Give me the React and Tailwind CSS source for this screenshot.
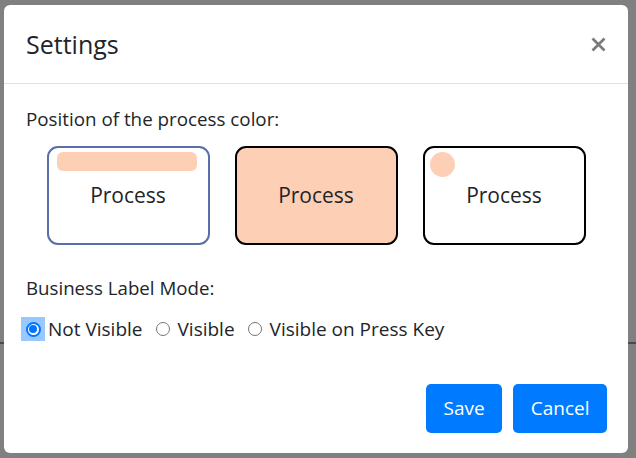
import { useState } from "react";

const FONT = { fontFamily: '"Open Sans", "Noto Sans", Arial, sans-serif' };

const MODES = ["Not Visible", "Visible", "Visible on Press Key"];

function Radio({ checked }) {
  if (checked) {
    return (
      <span className="flex h-[24px] w-[24px] items-center justify-center bg-[#99c8ff]">
        <span className="flex h-[15px] w-[15px] items-center justify-center rounded-full border-2 border-[#0075ff] bg-white">
          <span className="h-[8px] w-[8px] rounded-full bg-[#0075ff]" />
        </span>
      </span>
    );
  }
  return <span className="h-[14px] w-[14px] rounded-full border border-[#767676] bg-white" />;
}

export default function App() {
  const [position, setPosition] = useState(0);
  const [mode, setMode] = useState(0);

  return (
    <div className="relative h-[458px] w-[636px] overflow-hidden bg-[#808080] pl-[4px] pt-[5px] text-[#212529]" style={FONT}>
      {/* page behind the backdrop */}
      <div className="absolute left-0 right-0 top-[342px] h-[2px] bg-[#4a4a4a]" />

      <div className="relative flex h-[448px] w-[624px] flex-col rounded-[6px] bg-white">
        <div className="flex h-[79px] items-center justify-between border-b border-[#dee2e6] pl-[22px] pr-[20px]">
          <h5 className="text-[25px] font-medium leading-none">Settings</h5>
          <button type="button" className="flex h-[20px] w-[20px] items-center justify-center">
            <svg width="15" height="15" viewBox="0 0 15 15">
              <path d="M1.5 1.5 L13.5 13.5 M13.5 1.5 L1.5 13.5" stroke="#7b7b7b" strokeWidth="2.7" />
            </svg>
          </button>
        </div>

        <div className="flex flex-1 flex-col px-[22px] pt-[22px]">
          <p className="text-[18.8px] leading-[27px]">Position of the process color:</p>

          <div className="mt-[13px] flex justify-center gap-[25px]">
            {[0, 1, 2].map((i) => (
              <button
                key={i}
                type="button"
                onClick={() => setPosition(i)}
                className={`relative flex h-[99px] w-[163px] items-center justify-center rounded-[11px] border-2 text-[21px] ${
                  i === 0 ? "border-[#5b6ea9] bg-white" : i === 1 ? "border-black bg-[#fdd0b5]" : "border-black bg-white"
                }`}
              >
                {i === 0 && <span className="absolute left-[8px] right-[11px] top-[4px] h-[19px] rounded-[6px] bg-[#fdd0b5]" />}
                {i === 2 && <span className="absolute left-[5px] top-[4px] h-[25px] w-[25px] rounded-full bg-[#fdd0b5]" />}
                <span className="leading-none">Process</span>
              </button>
            ))}
          </div>

          <p className="mt-[29px] text-[18.7px] leading-[27px]">Business Label Mode:</p>

          <div className="ml-[-5px] mt-[14px] flex items-center text-[19px]">
            {MODES.map((m, i) => (
              <label
                key={m}
                onClick={() => setMode(i)}
                className={`flex cursor-pointer items-center ${i === 0 ? "" : "ml-[13px] gap-[8px]"}`}
              >
                <Radio checked={mode === i} />
                <span className={i === 0 ? "ml-[3px]" : ""}>{m}</span>
              </label>
            ))}
          </div>

          <div className="mr-[-1px] mt-auto flex justify-end gap-[11px] pb-[20px]">
            <button type="button" className="h-[49px] rounded-[5px] bg-[#007bff] px-[17.5px] text-[19px] text-white">
              Save
            </button>
            <button type="button" className="h-[49px] rounded-[5px] bg-[#007bff] px-[17.5px] text-[19px] text-white">
              Cancel
            </button>
          </div>
        </div>
      </div>
    </div>
  );
}
